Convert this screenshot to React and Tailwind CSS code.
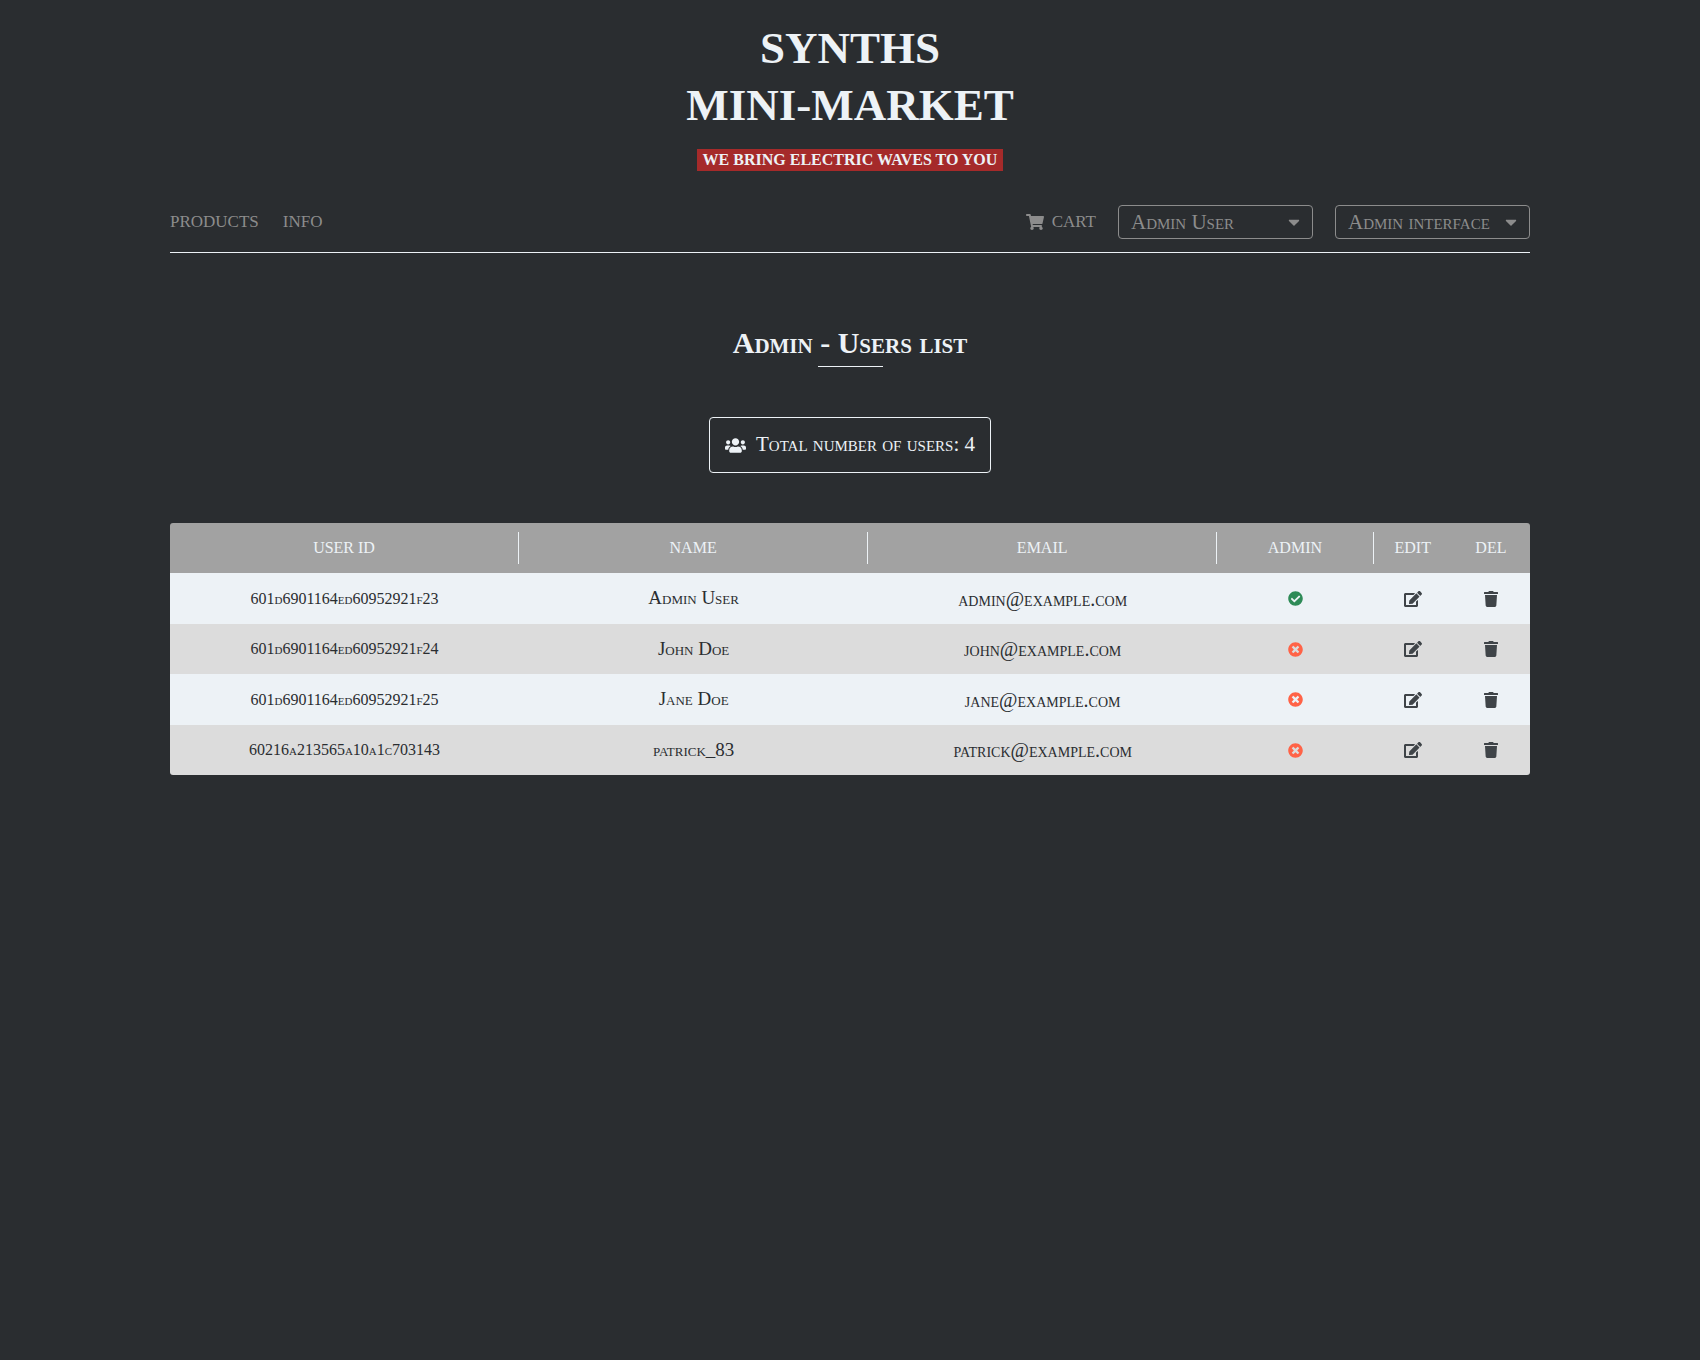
import React from "react";
import {
  FaShoppingCart,
  FaCaretDown,
  FaUsers,
  FaCheckCircle,
  FaTimesCircle,
  FaEdit,
  FaTrash,
} from "react-icons/fa";

const users = [
  { id: "601d6901164ed60952921f23", name: "Admin User", email: "admin@example.com", admin: true },
  { id: "601d6901164ed60952921f24", name: "John Doe", email: "john@example.com", admin: false },
  { id: "601d6901164ed60952921f25", name: "Jane Doe", email: "jane@example.com", admin: false },
  { id: "60216a213565a10a1c703143", name: "patrick_83", email: "patrick@example.com", admin: false },
];

const columns = ["User ID", "Name", "Email", "Admin", "Edit", "Del"];

function NavSelect({ label, options }) {
  return (
    <div className="relative">
      <select
        aria-label={label}
        className="block h-[34px] w-[195px] cursor-pointer appearance-none rounded border border-[#8c8c8c] bg-transparent pl-3 pr-8 text-[21px] leading-8 text-[#8c8c8c] [font-variant-caps:small-caps]"
      >
        {options.map((option) => (
          <option key={option}>{option}</option>
        ))}
      </select>
      <FaCaretDown className="pointer-events-none absolute right-2.5 top-2 size-[18px]" />
    </div>
  );
}

function Header() {
  return (
    <header>
      <div className="flex flex-col items-center">
        <h1 className="text-center text-[45px] leading-[57px] font-bold uppercase">
          Synths
          <br />
          Mini-Market
        </h1>
        <p className="mt-[15px] bg-[#a52a2a] px-1.5 text-base leading-[22px] font-bold whitespace-nowrap uppercase">
          We bring electric waves to you
        </p>
      </div>
      <nav className="mt-[34px] flex items-center justify-between border-b border-[#edf2f6] pb-[13px] text-[17px] text-[#8c8c8c]">
        <div className="flex gap-6 uppercase">
          <a href="#products">Products</a>
          <a href="#info">Info</a>
        </div>
        <div className="flex items-center gap-[22px]">
          <a href="#cart" className="flex items-center gap-2 uppercase">
            <FaShoppingCart className="size-[18px]" />
            Cart
          </a>
          <NavSelect label="Account" options={["Admin User", "Profile", "Logout"]} />
          <NavSelect label="Administration" options={["Admin interface", "Users", "Products", "Orders"]} />
        </div>
      </nav>
    </header>
  );
}

function UsersTable() {
  return (
    <table className="mt-[50px] w-full table-fixed overflow-hidden rounded-[3px] text-center">
      <colgroup>
        <col />
        <col />
        <col />
        <col className="w-[11.5%]" />
        <col className="w-[5.75%]" />
        <col className="w-[5.75%]" />
      </colgroup>
      <thead>
        <tr className="bg-[#a2a2a2] text-base text-[#edf2f6] uppercase">
          {columns.map((column, i) => (
            <th key={column} scope="col" className="h-[50px] p-0 font-normal">
              <div className={i < 4 ? "border-r border-[#edf2f6] leading-8" : "leading-8"}>{column}</div>
            </th>
          ))}
        </tr>
      </thead>
      <tbody className="text-[#2a2d30]">
        {users.map((user) => (
          <tr key={user.id} className="h-[50px] bg-[#dcdcdc] odd:h-[51px] odd:bg-[#edf2f6]">
            <td className="p-0 text-base [font-variant-caps:small-caps]">{user.id}</td>
            <td className="p-0 text-[19px] [font-variant-caps:small-caps]">{user.name}</td>
            <td className="p-0 text-xl [font-variant-caps:small-caps]">{user.email}</td>
            <td className="p-0">
              {user.admin ? (
                <FaCheckCircle role="img" aria-label="Yes" className="mx-auto size-[15px] text-[#2e8b57]" />
              ) : (
                <FaTimesCircle role="img" aria-label="No" className="mx-auto size-[15px] text-[#ff6347]" />
              )}
            </td>
            <td className="p-0 text-[#3f4448]">
              <button type="button" aria-label={`Edit ${user.name}`} className="block w-full cursor-pointer">
                <FaEdit className="mx-auto size-[18px]" />
              </button>
            </td>
            <td className="p-0 text-[#3f4448]">
              <button type="button" aria-label={`Delete ${user.name}`} className="block w-full cursor-pointer">
                <FaTrash className="mx-auto size-4" />
              </button>
            </td>
          </tr>
        ))}
      </tbody>
    </table>
  );
}

export default function App() {
  return (
    <div className="min-h-screen bg-[#2a2d30] pt-5 font-['Liberation_Serif',serif] text-[#edf2f6]">
      <div className="mx-auto w-4/5">
        <Header />
        <main className="flex flex-col items-center">
          <h2 className="mt-[70px] text-[30px] leading-10 font-bold [font-variant-caps:small-caps]">
            Admin - Users list
          </h2>
          <div className="mt-[3px] h-px w-[65px] bg-[#edf2f6]" />
          <div className="mt-[50px] flex h-14 items-center gap-2.5 rounded border border-[#edf2f6] px-[15px] text-[21px] [font-variant-caps:small-caps]">
            <FaUsers className="size-[21px]" />
            Total number of users: 4
          </div>
          <UsersTable />
        </main>
      </div>
    </div>
  );
}
